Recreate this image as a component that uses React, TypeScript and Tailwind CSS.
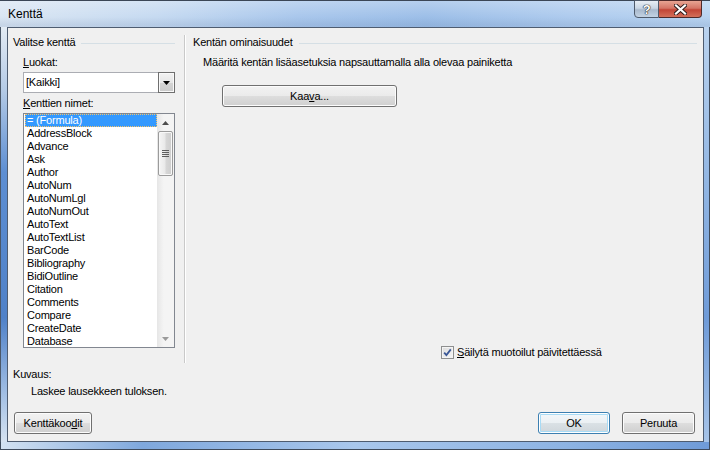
import React from "react";

const items = [
  "= (Formula)",
  "AddressBlock",
  "Advance",
  "Ask",
  "Author",
  "AutoNum",
  "AutoNumLgl",
  "AutoNumOut",
  "AutoText",
  "AutoTextList",
  "BarCode",
  "Bibliography",
  "BidiOutline",
  "Citation",
  "Comments",
  "Compare",
  "CreateDate",
  "Database",
];

interface BtnProps {
  children: React.ReactNode;
  className?: string;
  primary?: boolean;
}

const VistaButton = ({ children, className = "", primary }: BtnProps) => {
  return (
    <div
      className={`flex items-center justify-center rounded-[3px] border ${
        primary
          ? "border-[#3c7fb1] shadow-[inset_0_0_0_1px_#fff,inset_0_0_0_2px_#a8dbf5] bg-[linear-gradient(180deg,#f4f8fb_0%,#ebf0f3_48%,#dae1e5_52%,#cfd6db_100%)]"
          : "border-[#707070] shadow-[inset_0_0_0_1px_#fcfcfc] bg-[linear-gradient(180deg,#f2f2f2_0%,#ebebeb_48%,#dddddd_52%,#cfcfcf_100%)]"
      } ${className}`}
    >
      {children}
    </div>
  );
};

const GroupTitle = ({ label, className = "" }: { label: string; className?: string }) => (
  <div className={`flex items-center h-[13px] ${className}`}>
    <span className="leading-[13px]">{label}</span>
    <div className="flex-1 h-px bg-[#d5dfe5] ml-[6px] mt-px" />
  </div>
);

const Triangle = ({ up, color = "#4d4d4d" }: { up?: boolean; color?: string }) => (
  <svg width="7" height="4" viewBox="0 0 7 4">
    <path d={up ? "M0 4 L3.5 0 L7 4 Z" : "M0 0 L7 0 L3.5 4 Z"} fill={color} />
  </svg>
);

const ListBox = () => {
  return (
    <div className="mt-[3px] ml-[15px] w-[152px] h-[235px] border border-[#828790] bg-white flex overflow-hidden">
      <div className="flex-1 pl-px overflow-hidden">
        {items.map((it, i) => (
          <div
            key={it}
            className={`h-[13px] leading-[13px] pl-[2px] whitespace-nowrap ${
              i === 0 ? "bg-[#3399ff] text-white outline outline-1 outline-dotted outline-[#f5c36b] -outline-offset-1" : ""
            }`}
          >
            {it}
          </div>
        ))}
      </div>
      <div className="w-[17px] flex flex-col bg-[linear-gradient(90deg,#e6e6e6_0%,#f4f4f4_40%,#f4f4f4_100%)]">
        <div className="h-[17px] flex items-center justify-center">
          <Triangle up />
        </div>
        <div className="h-[45px] mx-px rounded-[2px] border border-[#9b9b9b] bg-[linear-gradient(90deg,#f5f5f5_0%,#e9e9e9_45%,#d6d6d6_55%,#cdcdcd_100%)] shadow-[inset_0_0_0_1px_#f8f8f8] flex flex-col items-center justify-center gap-[1px]">
          {[0, 1, 2, 3].map((k) => (
            <div key={k} className="w-[7px] h-px bg-[#5d5d5d]" />
          ))}
        </div>
        <div className="flex-1" />
        <div className="h-[17px] flex items-center justify-center">
          <Triangle color="#9a9a9a" />
        </div>
      </div>
    </div>
  );
};

const Combo = () => (
  <div className="mt-[3px] ml-[15px] w-[152px] h-[21px] flex border border-[#abadb3] bg-white">
    <div className="flex-1 pl-[2px] leading-[19px]">[Kaikki]</div>
    <div className="w-[17px] -my-px -mr-px border border-[#6f6f6f] bg-[linear-gradient(180deg,#f2f2f2_0%,#e6e6e6_50%,#d4d4d4_51%,#cacaca_100%)] shadow-[inset_0_0_0_1px_#f9f9f9] flex items-center justify-center">
      <Triangle color="#000" />
    </div>
  </div>
);

export default function App() {
  return (
    <div className="w-[710px] h-[450px] flex flex-col border-t border-[#3b4656] bg-[linear-gradient(180deg,rgba(255,255,255,0.25)_0px,rgba(255,255,255,0)_16px,rgba(60,90,140,0.12)_24px,rgba(255,255,255,0)_40px),linear-gradient(90deg,#dae6f3_0%,#c6daf1_22%,#a9c7ec_42%,#9dbfe8_60%,#aecbee_80%,#b8d3f0_100%)] font-['Liberation_Sans',Arial,sans-serif] text-[11px] tracking-[-0.2px] text-black select-none">
      {/* title bar */}
      <div className="h-[26px] flex items-start">
        <div className="pl-[8px] pt-[6px] text-[12px] tracking-normal leading-[14px] text-black">Kenttä</div>
        <div className="flex-1" />
        <div className="flex mr-[8px] -mt-px">
          <div className="w-[25px] h-[18px] rounded-bl-[4px] border border-[#4e5a6b] bg-[linear-gradient(180deg,#e8eef5_0%,#c9d6e4_45%,#a9b9cc_55%,#c3d3e4_100%)] flex items-center justify-center text-white font-bold text-[13px] leading-none [text-shadow:0_0_1px_#222,0_0_1px_#222,0_0_1px_#222]">
            ?
          </div>
          <div className="w-[43px] h-[18px] rounded-br-[4px] border border-l-0 border-[#4e2a2a] bg-[linear-gradient(180deg,#e8a493_0%,#d47566_45%,#c24536_55%,#d3705a_100%)] flex items-center justify-center">
            <svg width="13" height="11" viewBox="0 0 13 11">
              <path d="M2 1.5 L11 9.5 M11 1.5 L2 9.5" stroke="#2b1a1a" strokeWidth="4" strokeLinecap="square" />
              <path d="M2 1.5 L11 9.5 M11 1.5 L2 9.5" stroke="#fff" strokeWidth="2.2" strokeLinecap="square" />
            </svg>
          </div>
        </div>
      </div>

      <div className="flex-1 flex">
        <div className="w-[7px] border-l border-[#4b5869] bg-[linear-gradient(180deg,#e3ebf4_0%,#b5cbe6_15%,#5d8ed2_35%,#4f81c8_70%,#a9c4e6_90%,#d6e3f1_100%)]" />

        {/* content */}
        <div className="w-[697px] flex flex-col border border-[#4e5c70] bg-[#f0f0f0]">
          <div className="h-[335px] flex">
            {/* left column */}
            <div className="w-[176px] pt-[8px] flex flex-col">
              <GroupTitle label="Valitse kenttä" className="pl-[5px] mr-[9px]" />
              <div className="mt-[7px] pl-[15px] leading-[13px]">
                <span className="underline">L</span>uokat:
              </div>
              <Combo />
              <div className="mt-[4px] pl-[15px] leading-[13px]">
                <span className="underline">K</span>enttien nimet:
              </div>
              <ListBox />
            </div>

            <div className="w-px mt-[7px] bg-[#c9c9c9] shadow-[1px_0_0_#fff]" />

            {/* right column */}
            <div className="flex-1 pt-[8px] flex flex-col">
              <GroupTitle label="Kentän ominaisuudet" className="pl-[8px] mr-[6px]" />
              <div className="mt-[7px] pl-[18px] leading-[13px]">
                Määritä kentän lisäasetuksia napsauttamalla alla olevaa painiketta
              </div>
              <VistaButton className="mt-[16px] ml-[37px] w-[175px] h-[22px]">
                <span>
                  Kaa<span className="underline">v</span>a...
                </span>
              </VistaButton>
              <div className="flex-1" />
              <div className="flex items-center pl-[256px] mb-[4px] h-[13px]">
                <div className="w-[13px] h-[13px] border border-[#8e8f8f] bg-[linear-gradient(135deg,#dcdcdc_0%,#f6f6f6_100%)] shadow-[inset_0_0_0_1px_#f4f4f4] flex items-center justify-center">
                  <svg width="9" height="9" viewBox="0 0 9 9">
                    <path d="M1.2 4.6 L3.4 7 L7.8 1.4" stroke="#3a5796" strokeWidth="1.8" fill="none" />
                  </svg>
                </div>
                <div className="ml-[3px] leading-[13px]">
                  <span className="underline">S</span>äilytä muotoilut päivitettäessä
                </div>
              </div>
            </div>
          </div>

          <div className="mt-[5px] pl-[5px] leading-[13px]">Kuvaus:</div>
          <div className="mt-[4px] pl-[23px] leading-[13px]">Laskee lausekkeen tuloksen.</div>

          <div className="mt-[14px] flex px-[6px] pr-[8px]">
            <VistaButton className="w-[78px] h-[22px]">
              <span>
                Kenttäkoo<span className="underline">d</span>it
              </span>
            </VistaButton>
            <div className="flex-1" />
            <VistaButton primary className="w-[72px] h-[22px]">
              OK
            </VistaButton>
            <VistaButton className="ml-[12px] w-[73px] h-[22px]">Peruuta</VistaButton>
          </div>
        </div>

        <div className="w-[6px] border-r border-[#3f4b5c] bg-[linear-gradient(180deg,#b9d2ee_0%,#8fb4e2_40%,#6f9bd8_70%,#a7c4e8_100%)]" />
      </div>

      <div className="h-[8px] border-b border-l border-r border-[#3f4b5c] bg-[linear-gradient(90deg,#d3e2f2_0%,#7fa8dd_20%,#a9c7ec_50%,#8db3e3_80%,#6f9bd8_100%)]" />
    </div>
  );
}
